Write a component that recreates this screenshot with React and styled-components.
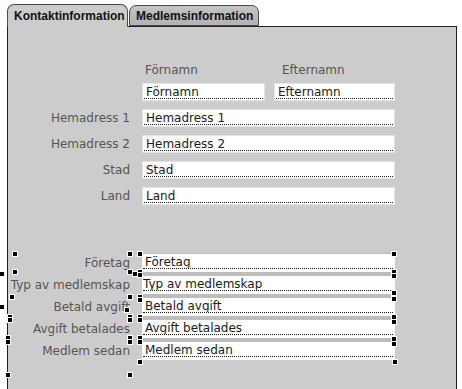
import styled, { createGlobalStyle } from "styled-components";

const GlobalStyle = createGlobalStyle`
  html, body {
    margin: 0;
    padding: 0;
    background: #ffffff;
    overflow: hidden;
  }
  body {
    font-family: "DejaVu Sans", Verdana, sans-serif;
  }
`;

const handles = [
  [15, 254], [130, 254], [140, 254],
  [2, 274], [15, 272], [130, 272], [135, 274], [140, 272], [140, 275],
  [12, 297], [130, 297], [140, 297], [140, 300],
  [2, 307], [127, 310],
  [10, 317], [10, 320], [130, 317], [130, 320], [140, 317], [140, 320],
  [8, 338], [8, 342], [130, 338], [130, 342], [140, 338], [140, 342],
  [140, 362], [8, 375], [130, 375],
  [394, 254], [394, 272], [394, 276], [394, 293], [394, 299],
  [394, 317], [394, 322], [394, 339], [394, 344], [395, 362],
];

const addressRows = ["Hemadress 1", "Hemadress 2", "Stad", "Land"];
const memberRows = [
  "Företag",
  "Typ av medlemskap",
  "Betald avgift",
  "Avgift betalades",
  "Medlem sedan",
];

const App = () => {
  return (
    <>
      <GlobalStyle />
      <Page>
        <TabRow>
          <Tab $active>Kontaktinformation</Tab>
          <Tab>Medlemsinformation</Tab>
        </TabRow>
        <Panel>
          <TopGrid>
            <span />
            <HeaderRow>
              <Header $indent={3} $width={123}>Förnamn</Header>
              <Header $indent={8}>Efternamn</Header>
            </HeaderRow>
            <span />
            <NameRow>
              <Field $width={123}>
                <Value>Förnamn</Value>
              </Field>
              <Field $width={121}>
                <Value>Efternamn</Value>
              </Field>
            </NameRow>
            {addressRows.map((row) => (
              <Row key={row}>
                <Label>{row}</Label>
                <Field>
                  <Value>{row}</Value>
                </Field>
              </Row>
            ))}
          </TopGrid>
          <LowerGrid>
            <LabelStack>
              {memberRows.map((row) => (
                <StackLabel key={row}>{row}</StackLabel>
              ))}
            </LabelStack>
            <FieldStack>
              {memberRows.map((row) => (
                <StackField key={row}>
                  <Value $tight={row === "Typ av medlemskap"}>{row}</Value>
                </StackField>
              ))}
            </FieldStack>
          </LowerGrid>
        </Panel>
        {handles.map(([x, y], i) => (
          <Handle key={i} style={{ left: x - 2, top: y - 2 }} />
        ))}
      </Page>
    </>
  );
};

export default App;

const Page = styled.div`
  position: relative;
  width: 462px;
  height: 389px;
  padding: 4px 0 0 7px;
  box-sizing: border-box;
  overflow: hidden;
`;

const TabRow = styled.div`
  display: flex;
  align-items: flex-end;
  height: 22px;
  gap: 1px;
`;

const Tab = styled.div`
  position: relative;
  z-index: ${({ $active }) => ($active ? 2 : 1)};
  box-sizing: border-box;
  width: ${({ $active }) => ($active ? "121px" : "130px")};
  height: ${({ $active }) => ($active ? "23px" : "21px")};
  margin-bottom: ${({ $active }) => ($active ? "-1px" : "0")};
  padding: ${({ $active }) => ($active ? "4px 0 0 6px" : "3px 0 0 6px")};
  border: 1px solid #4a4a4a;
  border-bottom: ${({ $active }) => ($active ? "none" : "1px solid #4a4a4a")};
  border-radius: 7px 7px 0 0;
  background: ${({ $active }) =>
    $active ? "#cccccc" : "linear-gradient(#c4c4c4, #b2b2b2)"};
  font-family: "Liberation Sans", Arial, sans-serif;
  font-weight: 700;
  font-size: 12px;
  line-height: 14px;
  color: #111111;
  white-space: nowrap;
`;

const Panel = styled.div`
  box-sizing: border-box;
  width: 450px;
  height: 380px;
  border: 1px solid #1e1e1e;
  border-bottom: none;
  background: #cccccc;
  padding-top: 36px;
`;

const TopGrid = styled.div`
  display: grid;
  grid-template-columns: 122px 253px;
  column-gap: 12px;
  row-gap: 8px;
  align-items: center;
`;

const HeaderRow = styled.div`
  display: flex;
  margin-bottom: -3px;
`;

const Header = styled.span`
  box-sizing: border-box;
  width: ${({ $width }) => ($width ? `${$width + 9}px` : "auto")};
  padding-left: ${({ $indent }) => $indent}px;
  font-size: 12px;
  line-height: 15px;
  color: #555555;
`;

const NameRow = styled.div`
  display: flex;
  gap: 9px;
`;

const Row = styled.div`
  display: contents;
`;

const Label = styled.span`
  text-align: right;
  font-size: 12px;
  line-height: 15px;
  color: #555555;
  white-space: nowrap;
`;

const Field = styled.div`
  box-sizing: border-box;
  width: ${({ $width }) => ($width ? `${$width}px` : "253px")};
  height: 18px;
  background: #ffffff;
  border: 1px solid #e2e2e2;
  padding: 0 1px 0 1px;
`;

const Value = styled.div`
  height: 14px;
  padding-left: ${({ $tight }) => ($tight ? "0" : "2px")};
  border-bottom: 1px dotted #1a1a1a;
  font-size: 12px;
  line-height: 16px;
  color: #1a1a1a;
  white-space: nowrap;
  overflow: hidden;
`;

const LowerGrid = styled.div`
  display: grid;
  grid-template-columns: 122px 253px;
  column-gap: 12px;
  margin-top: 48px;
`;

const LabelStack = styled.div`
  display: flex;
  flex-direction: column;
  gap: 4px;
  padding-top: 1px;
`;

const StackLabel = styled.span`
  height: 18px;
  text-align: right;
  font-size: 12px;
  line-height: 18px;
  color: #555555;
  white-space: nowrap;
`;

const FieldStack = styled.div`
  display: flex;
  flex-direction: column;
  gap: 4px;
  padding-top: 1px;
  background: linear-gradient(to right, #bdbdbd 250px, #cccccc 250px);
`;

const StackField = styled.div`
  box-sizing: border-box;
  height: 18px;
  background: #ffffff;
  padding: 0 2px 0 1px;
`;

const Handle = styled.div`
  position: absolute;
  width: 4px;
  height: 4px;
  background: #000000;
  box-shadow: 0 0 0 1px #ffffff;
  z-index: 5;
`;
